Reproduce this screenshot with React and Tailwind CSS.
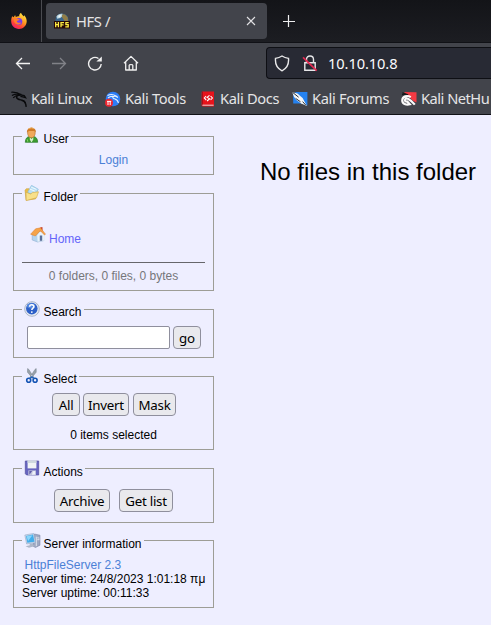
const UI = "font-['Noto_Sans',sans-serif]";

function FirefoxIcon() {
  return (
    <svg width="18" height="18" viewBox="0 0 18 18" className="shrink-0">
      <defs>
        <linearGradient id="fx" x1="0.8" y1="0" x2="0.25" y2="1">
          <stop offset="0" stopColor="#fff04a" />
          <stop offset="0.45" stopColor="#ff9a1f" />
          <stop offset="0.75" stopColor="#ff4037" />
          <stop offset="1" stopColor="#e81e77" />
        </linearGradient>
      </defs>
      <path d="M2.2 4.2L3.7 5.3L5.1 3.1L5.8 4.9C7.2 4.4 8 4.2 9.2 4.4C9 2.8 9.8 1.5 11 .7C11.4 2.3 12.8 3 13.6 4.4L14.2 3.2C16 5.2 16.8 7.2 16.7 9.5C16.5 13.8 13.2 17 9 17C4.6 17 1.3 13.8 1.2 9.6C1.1 7.5 1.4 5.8 2.2 4.2Z" fill="url(#fx)" />
      <circle cx="8.8" cy="9.5" r="3.5" fill="#7a3be8" />
      <path d="M3.4 6.2C5.3 5.3 6.9 5.8 7.8 7.1L9.8 7.5C9.1 8.6 7.4 8.4 6.8 9.3C7.2 11 9.6 11.2 11.3 10.4C10.1 13.2 6.2 13.1 4.7 10.7C3.8 9.4 4.2 7.7 3.4 6.2Z" fill="#ff7d2c" />
    </svg>
  );
}

function HfsIcon() {
  return (
    <svg width="16" height="16" viewBox="0 0 16 16" className="shrink-0">
      <circle cx="8" cy="7" r="6.6" fill="#39658c" />
      <path d="M2.5 3.3C4 1 7 .2 8.8 1L8 3.5L6.4 5L3 5.8Z" fill="#b9d5df" />
      <path d="M8.4 1.2L11 1.5L13.7 4.3L14 8H10.5L9 5.6L7.8 4Z" fill="#917d47" />
      <path d="M4.5 2.5L7 2L6.3 4L4.5 4.7Z" fill="#f5faf9" />
      <rect y="8" width="16" height="7.5" fill="#240706" />
      <path d="M1.7 9V14.3M4.4 9V14.3M1.7 11.6H4.4M7 14.3V9.6H10M7 11.8H9.6M14.7 9.6H11.9V11.7H14.2V13.8H11.3" fill="none" stroke="#ffed43" strokeWidth="1.3" />
    </svg>
  );
}

function KaliDragon() {
  return (
    <svg width="16" height="17" viewBox="0 0 16 17" className="shrink-0">
      <g fill="none" stroke="#090a0c">
        <path d="M.2 1.2C3.5 1 7.2 1.6 10.1 3.6M.9 4.4C4.2 2.8 7.6 2.9 10.2 3.9M2.2 6.8C3.8 4.9 6.2 4.2 8.8 4.4" strokeWidth="1.1" />
        <path d="M10.3 3.6C6.5 3.5 5.2 5 5.7 6.8C6.3 8.9 10 8.6 12.2 9.6C14.1 10.5 14.8 12.3 15.2 15.8" strokeWidth="1.5" />
        <path d="M9.7 3.8L13.2 4.6L14.6 6.7L11.8 5.9L9.4 5.4" strokeWidth="1.2" />
        <path d="M10.5 9.3C13 9.8 13.8 10.6 14.4 12" strokeWidth="1.5" />
      </g>
    </svg>
  );
}

function KaliToolsIcon() {
  return (
    <svg width="16" height="16" viewBox="0 0 16 16" className="shrink-0">
      <circle cx="8" cy="8" r="7.3" fill="#2d7df5" />
      <path d="M2.5 4.6C5.5 3 8.5 3.3 11 5C8 5 7 6.2 8.5 7.4C10.5 8.2 12.9 8.3 13.4 12M3 7C4.4 5.8 6.6 5.2 8.3 5.5M10.2 5.1L13 6.6" fill="none" stroke="#e5f1ff" strokeWidth="1.1" />
      <circle cx="4" cy="11.8" r="4" fill="#ed2630" />
      <path d="M2 10.4H6.2M3 10.4V14M5.2 10.4V14" stroke="#fff" strokeWidth="1" />
    </svg>
  );
}

function KaliDocsIcon() {
  return (
    <svg width="14" height="16" viewBox="0 0 14 16" className="shrink-0">
      <path d="M2 .5H13V15.5H2.2C.8 15.5.6 14.7.6 14V2C.6 1 1 .5 2 .5Z" fill="#e7131b" />
      <path d="M1.5 .5V14" stroke="#a90e17" />
      <path d="M1.4 14.2H12.6" stroke="#e3dada" />
      <path d="M5.1 5L3.3 7L5.2 9M9.6 5L11.4 7L9.6 9M8.5 4.3L6.1 6.4L8.7 7.8L6 10" fill="none" stroke="#fff" strokeWidth="1.1" />
    </svg>
  );
}

function KaliForumsIcon() {
  return (
    <svg width="16" height="16" viewBox="0 0 16 16" className="shrink-0">
      <path d="M4 1H15.4V14.5L12 12.6H1.2V3Z" fill="#2582ef" />
      <path d="M.3 1.2L5.4 2.5L10.6 7L14.9 15L9.2 12.4L4.4 9L2 5.7Z" fill="#f3f5f6" />
      <path d="M.6 1.4L6.6 6.2M10.6 10.6L13.7 14M3.6 7.4L8.5 10.8" fill="none" stroke="#2b3037" strokeWidth="1" />
    </svg>
  );
}

function NetHunterIcon() {
  return (
    <svg width="16" height="16" viewBox="0 0 16 16" className="shrink-0">
      <path d="M3 1.1L15.5 1.3V11.5L12.4 10L8.2 6.2Z" fill="#f33a43" />
      <path d="M1.3 1.8L7.2 3.9M1 3.7L5.2 3.4" stroke="#17191c" strokeWidth="1.3" />
      <path d="M9.8 6.1C6 3.8 1.6 5.4 1.3 9C1 12.8 5.3 14.2 8.8 13.3L6.2 10.5C4.3 10.7 3.6 9.6 4.2 8.4C5.2 6.4 8.5 7.5 13.8 13.6" fill="none" stroke="#fbfafa" strokeWidth="2.2" />
    </svg>
  );
}

function UserIcon() {
  return (
    <svg width="16" height="16" viewBox="0 0 16 16">
      <path d="M1.3 15.3C1.5 11.5 3 9.8 5.5 9.5H9.5C12 9.8 13.5 11.5 13.7 15.3Z" fill="#3d9c2f" stroke="#287a28" strokeWidth=".7" />
      <path d="M5.8 10L7.5 12L9.3 10V12.5L7.8 14.9H7.2L5.8 12.5Z" fill="#d6f1cb" />
      <ellipse cx="7.4" cy="6" rx="3.8" ry="4.8" fill="#f0a95c" stroke="#b56d27" strokeWidth=".6" />
      <path d="M3 5.8C1.7-.7 12.7-1.3 11.9 5.6L10.7 4.1H4.5Z" fill="#cf7a28" />
      <path d="M4.5 1.7Q7.5.2 10 1.6" stroke="#ebac5a" fill="none" />
      <path d="M3.1 12.2L3.8 14.7" stroke="#83d367" />
    </svg>
  );
}

function FolderIcon() {
  return (
    <svg width="16" height="16" viewBox="0 0 16 16">
      <path d="M1 5.2L2.3 3.7H5.2L6.5 5H13.2L11.5 14L2 15.2Z" fill="#e9bd48" stroke="#c69a34" strokeWidth=".5" />
      <path d="M7.5 .3L14.3 4.2L11.2 10L3.5 7.6Z" fill="#b9dff5" stroke="#83b9d8" strokeWidth=".6" />
      <path d="M7.2 2.2L12.4 4.4M5.9 4.1L10.9 6.2" stroke="#f3fbff" />
      <path d="M2 7.2L6.6 9L8.5 7.6L14.5 6.8L12.6 12.7L2.2 15.6Z" fill="#f8e08a" stroke="#d2a946" strokeWidth=".6" />
    </svg>
  );
}

function HomeIcon() {
  return (
    <svg width="16" height="17" viewBox="0 0 16 17" className="shrink-0">
      <path d="M2.2 7.5L7.7 4.5L13.8 8.1V14.6L7.6 16L2.2 14Z" fill="#b4d4ee" stroke="#90afd0" strokeWidth=".6" />
      <path d="M7.2 9L11 4.3L14.7 8.5V14.4L7.6 15.8Z" fill="#e7f2fa" />
      <path d="M10.4 1.2H12.5V5.5H10.4Z" fill="#c83a22" />
      <path d="M.6 8.2L5.6 2.8L10.5 1.8L15.5 8.2L14.5 9L10.3 4.7L5.4 10Z" fill="#f5a348" stroke="#dc7d28" strokeWidth=".5" />
      <rect x="9.8" y="9.5" width="2.4" height="5.3" fill="#586e99" />
    </svg>
  );
}

function SearchIcon() {
  return (
    <svg width="16" height="16" viewBox="0 0 16 16">
      <circle cx="8" cy="8" r="7.3" fill="#e7ebf3" stroke="#9aa7bb" strokeWidth=".8" />
      <circle cx="7.8" cy="7.6" r="5.8" fill="#2d60c8" />
      <ellipse cx="7" cy="4.8" rx="4" ry="2.6" fill="#5488df" />
      <path d="M5.6 5.8C5.8 2.9 10.3 3.3 9.9 5.9C9.7 7.2 7.8 7.3 7.8 9" fill="none" stroke="#fff" strokeWidth="1.5" />
      <circle cx="7.8" cy="11.1" r=".9" fill="#fff" />
    </svg>
  );
}

function ScissorsIcon() {
  return (
    <svg width="16" height="16" viewBox="0 0 16 16">
      <path d="M3.6 .6L4.8 1.4L9.9 9.6L8.4 10L3.5 4.2ZM12.2.6L11 1.4L5.8 9.6L7.4 10L12.2 4.2Z" fill="#9aa2aa" stroke="#737e88" strokeWidth=".5" />
      <circle cx="4.7" cy="12.3" r="2" fill="none" stroke="#1454b4" strokeWidth="1.6" />
      <circle cx="11.1" cy="12.3" r="2" fill="none" stroke="#1454b4" strokeWidth="1.6" />
      <path d="M5.6 10.6L7.9 8.9L10.2 10.6" fill="none" stroke="#2a65b7" strokeWidth="1.6" />
    </svg>
  );
}

function SaveIcon() {
  return (
    <svg width="16" height="16" viewBox="0 0 16 16">
      <path d="M1.3 1H14.7V15H2.6L1.3 13.7Z" fill="#6664bf" stroke="#504e9d" strokeWidth=".7" />
      <path d="M3.6 .6H12.4V8.4H3.6Z" fill="#f0f4f5" />
      <path d="M3.6 .6H12.4V3H3.6Z" fill="#ced9de" />
      <path d="M4.3 10.4H12V15H4.3Z" fill="#c0c3dc" />
      <path d="M5.3 10.9H8.2L5.6 14.6H5.3Z" fill="#615da8" />
      <path d="M8.8 11.2L11 11V14.6L8 14.8Z" fill="#eef1f9" />
    </svg>
  );
}

function ServerIcon() {
  return (
    <svg width="17" height="16" viewBox="0 0 17 16">
      <path d="M10.5 1L16 2.2V12.2L11.5 14.5L8.7 13.1Z" fill="#9fa8c2" stroke="#707b9d" strokeWidth=".5" />
      <path d="M12.3 3.7V13.2M13.3 4.8L15.5 5.1M13.3 6.7L15.5 6.7" stroke="#dfe4ee" />
      <path d="M.8 2L9.8 .4L11.6 9.7L2.6 11Z" fill="#cad6e8" stroke="#8ba0c0" strokeWidth=".5" />
      <path d="M2 2.9L9 1.6L10.5 8.7L3.3 9.8Z" fill="#42adeb" />
      <path d="M2.5 3.3L8.5 2.2L4.1 8Z" fill="#8bd5fb" />
      <path d="M5.5 10.8L8.8 10.4L9.7 12.4L11 13L5 14.8L1.5 13.3L5.8 12.3Z" fill="#aeb7c9" />
    </svg>
  );
}

function Panel({ icon, title, size, iconOffset = "mt-[2px]", titleOffset = "mt-[6px]", children }) {
  return (
    <fieldset className={`m-0 w-[201px] border border-[#9d9d96] p-0 ${size}`}>
      <legend className="ml-2 flex h-[21px] items-start pr-[2px] pl-[2px]">
        <span className={`w-[17px] ${iconOffset}`}>{icon}</span>
        <span className={`ml-[2.5px] text-[12px] leading-[14px] whitespace-nowrap ${titleOffset}`}>{title}</span>
      </legend>
      {children}
    </fieldset>
  );
}

function Button({ size, children }) {
  return (
    <button className={`h-[23px] shrink-0 rounded-[4px] border border-[#8f8f9d] bg-[#e9e9ed] p-0 pt-[2px] text-center text-[13.33px] leading-[19px] tracking-[-0.25px] whitespace-nowrap text-black ${UI} ${size}`}>
      {children}
    </button>
  );
}

function Bookmark({ icon, size, children }) {
  return (
    <span className={`flex shrink-0 items-center ${size}`}>
      {icon}
      <span className="pb-[2px]">{children}</span>
    </span>
  );
}

function BrowserChrome() {
  return (
    <header className={`h-[115px] border-b border-[#101116] bg-[#42444b] text-[#e5e5e6] ${UI}`}>
      <div className="flex h-[43px] border-b border-[#101116] bg-linear-to-b from-[#131418] to-[#1c1d22]">
        <div className="flex w-[42px] items-center border-r border-[#4a4b50] pl-[10px]">
          <FirefoxIcon />
        </div>
        <div className="mt-[3px] ml-1 flex h-9 w-[221px] items-center rounded-[4px] bg-[#42444b] pl-2">
          <HfsIcon />
          <span className="ml-[6px] text-[14.67px] leading-5 tracking-[-0.35px]">HFS /</span>
          <svg width="10" height="10" viewBox="0 0 10 10" className="ml-auto mr-[11px]">
            <path d="M1 1L9 9M9 1L1 9" stroke="#e2e2e4" strokeWidth="1.1" />
          </svg>
        </div>
        <svg width="12" height="12" viewBox="0 0 12 12" className="mt-[15px] ml-[16px]">
          <path d="M5.5 0V12M0 6.5H12" stroke="#eeeeef" strokeWidth="1.2" />
        </svg>
      </div>
      <div className="flex h-10 items-center">
        <svg width="16" height="16" viewBox="0 0 16 16" className="ml-[15px]">
          <path d="M15 8.5H1.5M7 3L1.5 8.5L7 14" fill="none" stroke="#f2f2f2" strokeWidth="1.3" />
        </svg>
        <svg width="16" height="16" viewBox="0 0 16 16" className="ml-5">
          <path d="M1 8.5H14.5M9 3L14.5 8.5L9 14" fill="none" stroke="#818288" strokeWidth="1.3" />
        </svg>
        <svg width="16" height="16" viewBox="0 0 16 16" className="ml-5">
          <path d="M11.5 3.5A6.3 6.3 0 1 0 14.2 9" fill="none" stroke="#f0f0f0" strokeWidth="1.4" />
          <path d="M14.8 1.5V6.5H9.4Z" fill="#f0f0f0" />
        </svg>
        <svg width="16" height="16" viewBox="0 0 16 16" className="ml-5">
          <path d="M1 8.2L8 1.4L15 8.2M2.7 7.2V15H13.3V7.2M6.2 14.6V10.2C6.2 9.3 9.8 9.3 9.8 10.2V14.6" fill="none" stroke="#f0f0f0" strokeWidth="1.3" strokeLinejoin="round" />
        </svg>
        <div className="ml-[127px] flex h-8 flex-1 items-center rounded-l-[4px] border border-r-0 border-[#0e0f14] bg-[#282a34] pl-[7px]">
          <svg width="16" height="17" viewBox="0 0 16 17">
            <path d="M8 1C10 2.3 12 3 14.5 3.4C15 9.3 12.6 13.7 8 15.8C3.4 13.7 1 9.3 1.5 3.4C4 3 6 2.3 8 1Z" fill="none" stroke="#e9e9ea" strokeWidth="1.4" />
          </svg>
          <svg width="16" height="17" viewBox="0 0 16 17" className="ml-3">
            <path d="M4.5 7.5V4.5C4.5-.2 11.5-.2 11.5 4.5V7.5M2.8 7.7H13.2V15.3H2.8Z" fill="none" stroke="#e7e7e9" strokeWidth="1.4" />
            <path d="M1 2.4L14.7 15.7" stroke="#e22850" strokeWidth="1.7" />
          </svg>
          <span className="ml-[10px] pb-px text-[14.67px] leading-5 tracking-[-0.1px] text-[#fbfbfe]">10.10.10.8</span>
        </div>
      </div>
      <nav className="flex h-8 items-center overflow-hidden text-[14.67px] leading-5 tracking-[-0.35px] whitespace-nowrap">
        <Bookmark icon={<KaliDragon />} size="w-[94px] gap-1 pl-[11px] tracking-[-0.5px]">Kali Linux</Bookmark>
        <Bookmark icon={<KaliToolsIcon />} size="w-[95px] gap-1 pl-[11px]">Kali Tools</Bookmark>
        <Bookmark icon={<KaliDocsIcon />} size="w-[92px] gap-[5px] pl-3">Kali Docs</Bookmark>
        <Bookmark icon={<KaliForumsIcon />} size="w-[109px] gap-1 pl-[11px]">Kali Forums</Bookmark>
        <Bookmark icon={<NetHunterIcon />} size="gap-1 pl-[11px] tracking-[-0.5px]">Kali NetHu</Bookmark>
      </nav>
    </header>
  );
}

export default function App() {
  return (
    <div className="h-[625px] w-[491px] overflow-hidden bg-[#eeeeff] font-['Liberation_Sans',Arial,sans-serif] text-[12px] leading-[14px] text-black">
      <BrowserChrome />
      <main className="flex">
        <aside className="flex w-[260px] shrink-0 flex-col gap-2 pt-[11px] pl-[13px]">
          <Panel icon={<UserIcon />} title="User" size="h-[49px]" iconOffset="mt-[1px]">
            <a className="mt-[6px] block text-center text-[#4b80d6]">Login</a>
          </Panel>
          <Panel icon={<FolderIcon />} title="Folder" size="h-[108px]" titleOffset="mt-[7px]">
            <a className="mt-[22px] flex items-start gap-[3px] pl-4 text-[#6464fa]">
              <HomeIcon />
              <span className="mt-[6px]">Home</span>
            </a>
            <div className="mx-2 mt-[16px] border-t border-[#66666b] pt-[6px] text-center text-[#76767a]">0 folders, 0 files, 0 bytes</div>
          </Panel>
          <Panel icon={<SearchIcon />} title="Search" size="h-[59px]">
            <div className="mt-[6px] flex gap-[3px] pl-[13px]">
              <input aria-label="Search" className="h-[23px] w-[143px] rounded-[2px] border border-[#8f8f9d] bg-white px-1 outline-none" />
              <Button size="w-[28px]">go</Button>
            </div>
          </Panel>
          <Panel icon={<ScissorsIcon />} title="Select" size="h-[84px]">
            <div className="mt-[6px] flex gap-[3px] pl-[38px]">
              <Button size="w-[28px]">All</Button>
              <Button size="w-[46px]">Invert</Button>
              <Button size="w-[43px] ml-[1px]">Mask</Button>
            </div>
            <p className="mt-[12px] text-center">0 items selected</p>
          </Panel>
          <Panel icon={<SaveIcon />} title="Actions" size="h-[65px]" titleOffset="mt-[7px]">
            <div className="mt-[10px] flex gap-[9px] pl-10">
              <Button size="w-[56px]">Archive</Button>
              <Button size="w-[54px]">Get list</Button>
            </div>
          </Panel>
          <Panel icon={<ServerIcon />} title="Server information" size="-mt-px h-[78px]" iconOffset="mt-[3px]" titleOffset="mt-[7px]">
            <div className="mt-[7px] pl-2 whitespace-nowrap">
              <a className="ml-[2.5px] block text-[#4b80d6]">HttpFileServer 2.3</a>
              <p>Server time: 24/8/2023 1:01:18 πμ</p>
              <p>Server uptime: 00:11:33</p>
            </div>
          </Panel>
        </aside>
        <h1 className="mt-[43px] text-[24px] leading-[28px] font-normal whitespace-nowrap">No files in this folder</h1>
      </main>
    </div>
  );
}
